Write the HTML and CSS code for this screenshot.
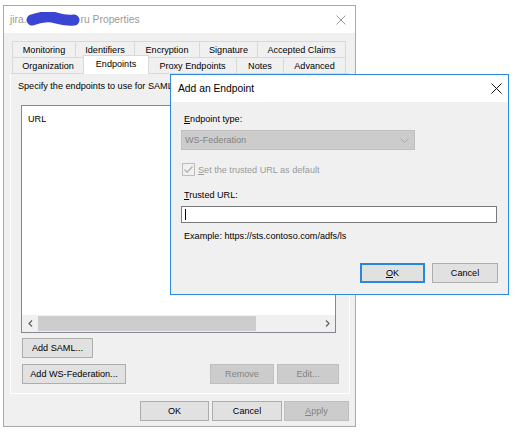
FILE: index.html
```html
<!DOCTYPE html>
<html lang="en">
<head>
    <meta charset="UTF-8">
    <title>Properties</title>
    <link rel="stylesheet" href="styles.css">
</head>
<body>

<div class="window main">
    <div class="titlebar">
        <span class="title">jira.<svg class="scribble" width="54" height="16" viewBox="0 0 54 16"><path d="M6 8 Q 20 3 30 6 T 48 8" fill="none" stroke="#3b45d4" stroke-width="11" stroke-linecap="round"/></svg>ru Properties</span>
        <span class="close"><svg width="10" height="10" viewBox="0 0 10 10"><path d="M0.5 0.5 L9.5 9.5 M9.5 0.5 L0.5 9.5" stroke="#9a9a9a" stroke-width="1"/></svg></span>
    </div>
    <div class="client">
        <div class="tabs">
            <div class="tab-row">
                <div class="tab w-monitoring">Monitoring</div>
                <div class="tab w-identifiers">Identifiers</div>
                <div class="tab w-encryption">Encryption</div>
                <div class="tab w-signature">Signature</div>
                <div class="tab w-claims">Accepted Claims</div>
            </div>
            <div class="tab-row">
                <div class="tab w-organization">Organization</div>
                <div class="tab w-endpoints active">Endpoints</div>
                <div class="tab w-proxy">Proxy Endpoints</div>
                <div class="tab w-notes">Notes</div>
                <div class="tab w-advanced">Advanced</div>
            </div>
        </div>
        <div class="page">
            <p class="hint">Specify the endpoints to use for SAML and WS-Federation Passive protocols.</p>
            <div class="list">
                <div class="list-body">URL</div>
                <div class="hscroll">
                    <span class="arrow"><svg width="5" height="7" viewBox="0 0 5 7"><path d="M4 0.5 L1 3.5 L4 6.5" fill="none" stroke="#606060" stroke-width="1.2"/></svg></span>
                    <span class="thumb"></span>
                    <span class="track"></span>
                    <span class="arrow"><svg width="5" height="7" viewBox="0 0 5 7"><path d="M1 0.5 L4 3.5 L1 6.5" fill="none" stroke="#606060" stroke-width="1.2"/></svg></span>
                </div>
            </div>
            <div class="btn-row">
                <button class="btn w-saml">Add SAML...</button>
            </div>
            <div class="btn-row second">
                <button class="btn w-wsfed">Add WS-Federation...</button>
                <button class="btn disabled w-remove">Remove</button>
                <button class="btn disabled w-edit">Edit...</button>
            </div>
        </div>
        <div class="footer">
            <button class="btn w-ok">OK</button>
            <button class="btn w-cancel">Cancel</button>
            <button class="btn disabled w-apply"><u>A</u>pply</button>
        </div>
    </div>
</div>

<div class="window dialog">
    <div class="titlebar">
        <span class="title">Add an Endpoint</span>
        <span class="close"><svg width="11" height="11" viewBox="0 0 11 11"><path d="M0.5 0.5 L10.5 10.5 M10.5 0.5 L0.5 10.5" stroke="#111" stroke-width="1"/></svg></span>
    </div>
    <div class="dialog-body">
        <div class="label"><u>E</u>ndpoint type:</div>
        <div class="combo">
            <span>WS-Federation</span>
            <svg width="9" height="5" viewBox="0 0 9 5"><path d="M0.5 0.5 L4.5 4.5 L8.5 0.5" fill="none" stroke="#a8a8a8" stroke-width="1"/></svg>
        </div>
        <div class="check-row">
            <span class="checkbox"><svg width="11" height="11" viewBox="0 0 11 11"><path d="M1.5 5.5 L4.2 8.2 L9.5 2.5" fill="none" stroke="#b3b3b3" stroke-width="1.4"/></svg></span>
            <span class="check-label"><u>S</u>et the trusted URL as default</span>
        </div>
        <div class="label second"><u>T</u>rusted URL:</div>
        <div class="input"><span class="caret"></span></div>
        <div class="example">Example: https://sts.contoso.com/adfs/ls</div>
        <div class="dialog-buttons">
            <button class="btn default w-dok"><u>O</u>K</button>
            <button class="btn w-dcancel">Cancel</button>
        </div>
    </div>
</div>

</body>
</html>
```

FILE: styles.css
```css
* {
    box-sizing: border-box;
}

body {
    margin: 0;
    width: 523px;
    height: 432px;
    overflow: hidden;
    position: relative;
    background-color: #fff;
    font-family: "Liberation Sans", Arial, sans-serif;
    font-size: 9.1px;
    color: #000;
}

u {
    text-decoration: underline;
    text-underline-offset: 1px;
}

.window {
    border: 1px solid #aaaaaa;
    background-color: #f0f0f0;
}

.main {
    margin: 5px 0 0 3px;
    width: 353px;
    height: 422px;
}

.titlebar {
    height: 27px;
    background-color: #fff;
    display: flex;
    align-items: center;
    justify-content: space-between;
    padding-left: 6px;
    font-size: 10.3px;
}

.main .titlebar {
    color: #9a9a9a;
}

.title {
    display: flex;
    align-items: center;
    white-space: nowrap;
}

.scribble {
    margin: 0 1px 0 -1px;
}

.main .close {
    width: 28px;
    display: flex;
    justify-content: center;
}

/* tab control */
.client {
    padding: 8px 0 0 6px;
}

.tabs {
    margin-left: 2px;
}

.tab-row {
    display: flex;
    height: 16px;
}

.tab {
    height: 16px;
    border: 1px solid #d9d9d9;
    border-bottom: none;
    background-color: #f0f0f0;
    display: flex;
    align-items: center;
    justify-content: center;
    white-space: nowrap;
    margin-left: -1px;
}

.tab:first-child {
    margin-left: 0;
}

.tab.active {
    height: 19px;
    margin-top: -2px;
    background-color: #fff;
    position: relative;
    z-index: 1;
    padding-bottom: 3px;
}

.w-monitoring { width: 64px; }
.w-identifiers { width: 60px; }
.w-encryption { width: 66px; }
.w-signature { width: 59px; }
.w-claims { width: 89px; }
.w-organization { width: 72px; }
.w-endpoints { width: 66px; }
.w-proxy { width: 89px; }
.w-notes { width: 48px; }
.w-advanced { width: 63px; }

.page {
    width: 340px;
    height: 321px;
    border: 1px solid #fff;
    border-top-color: #d9d9d9;
    background-color: #f0f0f0;
}

/* the dialog covers the rest of this line */
.hint {
    margin: 0;
    padding: 6px 0 0 7px;
    width: 159px;
    line-height: 12px;
    white-space: nowrap;
    overflow: hidden;
}

.list {
    margin: 13px 0 0 10px;
    width: 315px;
    height: 228px;
    border: 1px solid #828790;
    background-color: #fff;
    display: flex;
    flex-direction: column;
}

.list-body {
    flex: 1;
    padding: 7px 0 0 6px;
    line-height: 12px;
}

.hscroll {
    height: 17px;
    display: flex;
    background-color: #f0f0f0;
}

.hscroll .arrow {
    width: 16px;
    display: flex;
    align-items: center;
    justify-content: center;
}

.hscroll .thumb {
    width: 218px;
    margin: 1px 0;
    background-color: #cdcdcd;
}

.hscroll .track {
    flex: 1;
}

/* buttons */
.btn {
    height: 20px;
    padding: 0;
    border: 1px solid #adadad;
    background-color: #e1e1e1;
    font-family: inherit;
    font-size: 9.1px;
    color: #000;
}

.btn.disabled {
    border-color: #bfbfbf;
    background-color: #cccccc;
    color: #838383;
}

.btn.default {
    border: 2px solid #2b87d8;
}

.btn-row {
    display: flex;
    margin: 5px 10px 0 11px;
}

.btn-row.second {
    margin-top: 6px;
}

.w-saml { width: 71px; }
.w-wsfed { width: 104px; }
.w-remove { width: 64px; margin-left: auto; }
.w-edit { width: 62px; margin-left: 3px; }

.footer {
    display: flex;
    justify-content: flex-end;
    margin-top: 7px;
    padding-right: 6px;
}

.w-ok { width: 69px; }
.w-cancel { width: 70px; margin-left: 3px; }
.w-apply { width: 65px; margin-left: 2px; }

/* Add an Endpoint dialog, floating over the properties window */
.dialog {
    position: absolute;
    left: 170px;
    top: 74px;
    width: 339px;
    height: 221px;
    border-color: #2b8ad9;
}

.dialog .titlebar {
    padding-left: 7px;
}

.dialog .close {
    width: 24px;
    display: flex;
    justify-content: center;
}

.dialog-body {
    padding: 11px 10px 0 10px;
}

.label {
    line-height: 12px;
    margin-left: 3px;
}

.label.second {
    margin-top: 13px;
}

.combo {
    margin-top: 5px;
    width: 234px;
    height: 20px;
    border: 1px solid #bfbfbf;
    background-color: #cccccc;
    color: #838383;
    display: flex;
    align-items: center;
    justify-content: space-between;
    padding: 0 5px 0 3px;
}

.check-row {
    display: flex;
    align-items: center;
    margin: 13px 0 0 1px;
    height: 13px;
}

.checkbox {
    width: 13px;
    height: 13px;
    border: 1px solid #bcbcbc;
    background-color: #f0f0f0;
    display: flex;
}

.check-label {
    margin-left: 3px;
    color: #9a9a9a;
}

.input {
    margin-top: 5px;
    width: 316px;
    height: 17px;
    border: 1px solid #7a7a7a;
    background-color: #fff;
    display: flex;
    align-items: center;
    padding-left: 3px;
}

.caret {
    width: 1px;
    height: 11px;
    background-color: #000;
}

.example {
    margin: 7px 0 0 3px;
    line-height: 12px;
}

.dialog-buttons {
    display: flex;
    justify-content: flex-end;
    margin-top: 21px;
}

.w-dok { width: 65px; }
.w-dcancel { width: 66px; margin-left: 7px; }
```
